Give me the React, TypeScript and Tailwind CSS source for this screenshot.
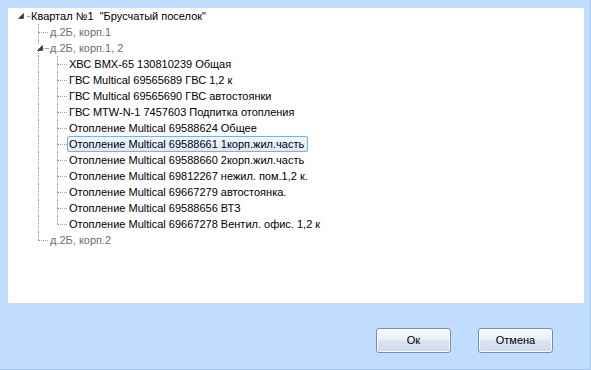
import React from 'react'

type Node = {
  label: string
  dim?: boolean
  children?: Node[]
  selected?: boolean
}

const TREE: Node = {
  label: 'Квартал №1  "Брусчатый поселок"',
  children: [
    { label: 'д.2Б, корп.1', dim: true },
    {
      label: 'д.2Б, корп.1, 2',
      dim: true,
      children: [
        { label: 'ХВС ВМХ-65 130810239 Общая' },
        { label: 'ГВС Multical 69565689 ГВС 1,2 к' },
        { label: 'ГВС Multical 69565690 ГВС автостоянки' },
        { label: 'ГВС MTW-N-1 7457603 Подпитка отопления' },
        { label: 'Отопление Multical 69588624 Общее' },
        { label: 'Отопление Multical 69588661 1корп.жил.часть', selected: true },
        { label: 'Отопление Multical 69588660 2корп.жил.часть' },
        { label: 'Отопление Multical 69812267 нежил. пом.1,2 к.' },
        { label: 'Отопление Multical 69667279 автостоянка.' },
        { label: 'Отопление Multical 69588656 ВТЗ' },
        { label: 'Отопление Multical 69667278 Вентил. офис. 1,2 к' },
      ],
    },
    { label: 'д.2Б, корп.2', dim: true },
  ],
}

type Row = { node: Node; level: number; last: boolean; guides: boolean[] }

// guides: one entry per column left of the row's own connector column
function flatten(node: Node, level: number, last: boolean, guides: boolean[], out: Row[]) {
  out.push({ node, level, last, guides })
  const kids = node.children ?? []
  kids.forEach((c, i) => {
    // root lines are hidden, so the root column never carries a pass-through line
    const next = level === 0 ? [false] : [...guides, !last]
    flatten(c, level + 1, i === kids.length - 1, next, out)
  })
  return out
}

function Expander() {
  return (
    <svg width="6" height="6" viewBox="0 0 6 6">
      <polygon points="5.5,0.5 5.5,5.5 0.5,5.5" fill="#3b3b3b" stroke="#262626" strokeWidth="0.6" />
    </svg>
  )
}

function Cell({ kind, last, expander }: { kind: 'pass' | 'conn' | 'none'; last?: boolean; expander?: boolean }) {
  return (
    <div className="relative h-4 w-[19px] shrink-0">
      {kind === 'pass' && <div className="absolute left-[9px] top-0 h-4 border-l border-dotted border-[#a0a0a0]" />}
      {kind === 'conn' && (
        <>
          <div
            className={
              last
                ? 'absolute left-[9px] top-0 h-[8px] border-l border-dotted border-[#a0a0a0]'
                : 'absolute left-[9px] top-0 h-4 border-l border-dotted border-[#a0a0a0]'
            }
          />
          <div className="absolute left-[9px] top-[8px] w-[10px] border-t border-dotted border-[#a0a0a0]" />
        </>
      )}
      {expander && (
        <>
          <div className="absolute left-[17px] top-[8px] w-[2px] border-t border-dotted border-[#a0a0a0]" />
          <div className="absolute left-[8px] top-[5px] flex bg-white">
            <Expander />
          </div>
        </>
      )}
    </div>
  )
}

function TreeRow({ row }: { row: Row }) {
  const { node, level, last, guides } = row
  const hasKids = !!node.children?.length
  return (
    <div className="flex h-4 items-center">
      {guides.map((g, i) => (
        <Cell key={i} kind={g ? 'pass' : 'none'} />
      ))}
      {level === 0 ? (
        <Cell kind="none" expander />
      ) : (
        <Cell kind="conn" last={last && !hasKids} expander={hasKids} />
      )}
      <span
        className={
          node.selected
            ? 'flex h-4 items-center rounded-[2px] border border-[#84acdd] bg-[linear-gradient(180deg,#f1f7fe,#dbeafc)] pl-px pr-[3px] whitespace-pre'
            : 'flex h-4 items-center border border-transparent pl-px pr-[3px] whitespace-pre'
        }
        style={{ color: node.dim ? '#6d6d6d' : '#000' }}
      >
        {node.label}
      </span>
    </div>
  )
}

function WinButton({ children }: { children: React.ReactNode }) {
  return (
    <button className="flex h-[25px] w-[75px] items-center justify-center rounded-[3px] border border-[#7b8ea6] bg-[linear-gradient(180deg,#f4f8fd_0%,#e9f0f9_48%,#d8e4f2_52%,#ccdbed_100%)] text-[11px] text-black shadow-[inset_0_0_0_1px_#fbfdff]">
      {children}
    </button>
  )
}

export default function App() {
  const rows = flatten(TREE, 0, true, [], [])
  return (
    <div
      className="flex h-[370px] w-[591px] flex-col border-r border-b border-[#a8c6ec] bg-[#c0dcfe] text-[11px] leading-none"
      style={{ fontFamily: '"Liberation Sans", Arial, sans-serif' }}
    >
      <div className="mx-2 mt-2 h-[295px] w-[576px] bg-white pl-[2px]">
        {rows.map((r, i) => (
          <TreeRow key={i} row={r} />
        ))}
      </div>
      <div className="flex justify-end gap-[27px] pt-[25px] pr-[37px]">
        <WinButton>Ок</WinButton>
        <WinButton>Отмена</WinButton>
      </div>
    </div>
  )
}
